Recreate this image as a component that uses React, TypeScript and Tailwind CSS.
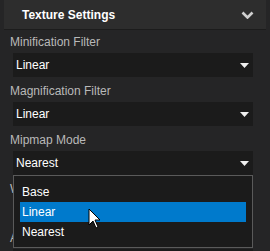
function Caret() {
  return (
    <svg width="9" height="5" viewBox="0 0 9 5" className="shrink-0">
      <path d="M0 0 H9 L4.5 5 Z" fill="#f0f0f0" />
    </svg>
  );
}

function Chevron() {
  return (
    <svg width="13" height="8" viewBox="0 0 13 8" className="shrink-0">
      <path d="M1.5 1.5 L6.5 6.5 L11.5 1.5" fill="none" stroke="#cfcfcf" strokeWidth="2.6" />
    </svg>
  );
}

function Dropdown({ value }: { value: string }) {
  return (
    <div className="ml-[13px] flex h-6 w-[240px] items-center justify-between bg-[#1b1b1b] pl-[3px] pr-[4px] text-white">
      <span>{value}</span>
      <Caret />
    </div>
  );
}

function Field({ label, value }: { label: string; value: string }) {
  return (
    <div className="flex flex-col pb-1">
      <div className="h-5 pl-[10px] leading-5 text-[#b9b9b9]">{label}</div>
      <div className="mt-px">
        <Dropdown value={value} />
      </div>
    </div>
  );
}

function Cursor() {
  return (
    <svg width="13" height="21" viewBox="0 0 13 21" className="absolute left-[88px] top-[208px]">
      <path d="M1 1 V17 L5 13 L8 20 L10 19 L7 12 H12 Z" fill="#fff" stroke="#000" strokeWidth="1" />
    </svg>
  );
}

export default function App() {
  const options = ['Base', 'Linear', 'Nearest'];
  return (
    <div
      className="relative h-[251px] w-[270px] overflow-hidden bg-[#252526] text-[12px]"
      style={{ fontFamily: '"Liberation Sans", Arial, sans-serif' }}
    >
      <div className="ml-1 flex h-[30px] w-[262px] items-center justify-between border-b border-[#1c1c1c] bg-[#2d2d2d] pl-[18px] pr-3">
        <span className="text-[12px] font-bold text-white">Texture Settings</span>
        <Chevron />
      </div>
      <div className="pt-[2px]">
        <Field label="Minification Filter" value="Linear" />
        <Field label="Magnification Filter" value="Linear" />
        <Field label="Mipmap Mode" value="Nearest" />
        {/* rows below sit under the open list; only their label edges peek out */}
        <Field label="Wrap Mode" value="" />
        <Field label="Anisotropy" value="" />
      </div>

      {/* open list for Mipmap Mode */}
      <div className="absolute left-[13px] top-[175px] flex h-[73px] w-[240px] flex-col border border-[#5a5a5a] bg-[#1b1b1b] px-[6px] pt-[6px] text-white">
        {options.map((o) => (
          <div
            key={o}
            className={`h-5 pl-[2px] leading-5 ${o === 'Linear' ? 'bg-[#007acc]' : ''}`}
          >
            {o}
          </div>
        ))}
      </div>
      <Cursor />
    </div>
  );
}
